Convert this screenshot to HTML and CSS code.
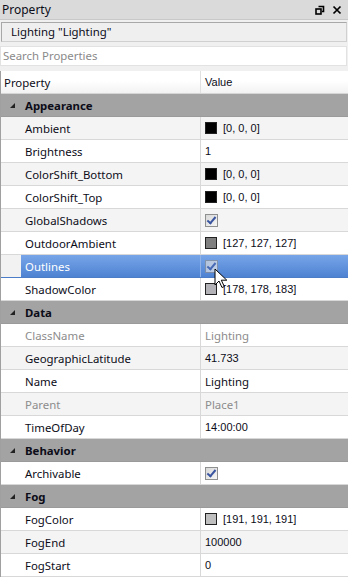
FILE: index.html
```html
<!DOCTYPE html>
<html>
<head>
<meta charset="utf-8">
<title>Property</title>
<link rel="stylesheet" href="styles.css">
</head>
<body>
<div class="panel">
  <div class="titlebar">
    <span class="title">Property</span>
    <span class="tb-icons">
      <svg width="10" height="10" viewBox="0 0 10 10"><path d="M3.5 1.5h5v5h-1.5" fill="none" stroke="#000" stroke-width="1.6"/><rect x="1" y="4" width="5" height="5" fill="none" stroke="#000" stroke-width="1.6"/></svg>
      <svg width="10" height="10" viewBox="0 0 10 10"><path d="M1.5 1.5l7 7M8.5 1.5l-7 7" stroke="#000" stroke-width="1.7"/></svg>
    </span>
  </div>
  <div class="tools">
    <div class="selection">Lighting "Lighting"</div>
    <div class="search">Search Properties</div>
  </div>
  <div class="grid">
    <div class="row head"><div class="name">Property</div><div class="value">Value</div></div>

    <div class="row cat"><span class="arrow"></span>Appearance</div>
    <div class="row alt"><div class="name">Ambient</div><div class="value num"><span class="swatch" style="background:#000"></span>[0, 0, 0]</div></div>
    <div class="row"><div class="name">Brightness</div><div class="value num">1</div></div>
    <div class="row alt"><div class="name">ColorShift_Bottom</div><div class="value num"><span class="swatch" style="background:#000"></span>[0, 0, 0]</div></div>
    <div class="row"><div class="name">ColorShift_Top</div><div class="value num"><span class="swatch" style="background:#000"></span>[0, 0, 0]</div></div>
    <div class="row alt"><div class="name">GlobalShadows</div><div class="value"><span class="check"></span></div></div>
    <div class="row"><div class="name">OutdoorAmbient</div><div class="value num"><span class="swatch" style="background:#7f7f7f"></span>[127, 127, 127]</div></div>
    <div class="row selected"><div class="name">Outlines</div><div class="value"><span class="check"></span></div></div>
    <div class="row"><div class="name">ShadowColor</div><div class="value num"><span class="swatch" style="background:#b2b2b7"></span>[178, 178, 183]</div></div>

    <div class="row cat"><span class="arrow"></span>Data</div>
    <div class="row"><div class="name ro">ClassName</div><div class="value ro">Lighting</div></div>
    <div class="row alt"><div class="name">GeographicLatitude</div><div class="value num">41.733</div></div>
    <div class="row"><div class="name">Name</div><div class="value">Lighting</div></div>
    <div class="row alt"><div class="name ro">Parent</div><div class="value ro">Place1</div></div>
    <div class="row"><div class="name">TimeOfDay</div><div class="value num">14:00:00</div></div>

    <div class="row cat"><span class="arrow"></span>Behavior</div>
    <div class="row"><div class="name">Archivable</div><div class="value"><span class="check"></span></div></div>

    <div class="row cat"><span class="arrow"></span>Fog</div>
    <div class="row"><div class="name">FogColor</div><div class="value num"><span class="swatch" style="background:#bfbfbf"></span>[191, 191, 191]</div></div>
    <div class="row alt"><div class="name">FogEnd</div><div class="value num">100000</div></div>
    <div class="row"><div class="name">FogStart</div><div class="value num">0</div></div>
  </div>
  <svg class="cursor" width="14" height="21" viewBox="0 0 14 21"><path d="M1 1v16l4-4 3 6.5 2.3-1-3-6.3h5.5z" fill="#fff" stroke="#000" stroke-width="1" stroke-linejoin="round"/></svg>
</div>
</body>
</html>
```

FILE: styles.css
```css
html, body {
  margin: 0;
  padding: 0;
  background: #fff;
}
.panel {
  position: relative;
  width: 348px;
  height: 577px;
  overflow: hidden;
  font-family: "Noto Sans", "Open Sans", sans-serif;
  font-size: 11.4px;
  color: #0c0c18;
  background: #f0f0f0;
}
.titlebar {
  display: flex;
  align-items: center;
  justify-content: space-between;
  height: 20px;
  padding: 0 6px 0 2px;
  background: #dadada;
  box-sizing: border-box;
  border-bottom: 1px solid #c8c8c8;
}
.title {
  font-size: 12px;
}
.tb-icons {
  display: flex;
  gap: 7px;
  align-items: center;
}
.tools {
  padding: 2px 1px 5px 1px;
}
.selection {
  height: 20px;
  box-sizing: border-box;
  padding: 0 0 0 9px;
  line-height: 18px;
  border: 1px solid #a8a8a8;
  border-right-color: #d0d0d0;
  border-bottom-color: #d0d0d0;
  background: #efefef;
  margin-bottom: 4px;
}
.search {
  height: 20px;
  box-sizing: border-box;
  padding-left: 2px;
  line-height: 18px;
  background: #fff;
  border: 1px solid #e2e2e2;
  color: #8a8a8a;
  margin-left: -1px;
}
.grid {
  background: #fff;
  border-left: 1px solid #a0a0a0;
}
.row {
  display: grid;
  grid-template-columns: 200px 1fr;
  height: 23px;
  box-sizing: border-box;
  border-bottom: 1px solid #d8d8d8;
  background: #fff;
}
.row.alt {
  background: #f4f4f4;
}
.row .name {
  padding-left: 24px;
  border-right: 1px solid #d8d8d8;
  display: flex;
  align-items: center;
  white-space: nowrap;
}
.row .value {
  padding-left: 4px;
  display: flex;
  align-items: center;
  white-space: nowrap;
}
.row .num {
  font-family: "Liberation Sans", Arial, sans-serif;
  font-size: 11px;
}
.row .ro {
  color: #8c8c8c;
}
.row.head {
  background: linear-gradient(#fff 0, #fff 45%, #f2f2f2 100%);
  border-bottom: 1px solid #d5d5d5;
}
.row.head .name {
  padding-left: 3px;
  border-right-color: #e0e0e0;
}
.row.head .value {
  font-family: "Liberation Sans", Arial, sans-serif;
  font-size: 11px;
}
.row.cat {
  display: flex;
  align-items: center;
  background: #a3a3a3;
  border-bottom: 1px solid #9a9a9a;
  font-weight: bold;
  padding-left: 9px;
}
.arrow {
  width: 0;
  height: 0;
  border-left: 5px solid transparent;
  border-bottom: 5px solid #222;
  margin-right: 10px;
  margin-top: 1px;
}
.row.selected {
  background: linear-gradient(#78a5e8, #4d82d2);
  color: #fff;
  border-bottom-color: #4a7cc8;
}
.row.selected .name {
  border-right-color: #8fb1e6;
  background: linear-gradient(#f2f2f2, #f2f2f2) no-repeat 0 0 / 20px 100%;
}
.row.selected .check {
  opacity: .65;
}
.swatch {
  display: inline-block;
  width: 12px;
  height: 12px;
  box-sizing: border-box;
  border: 1px solid #222;
  margin-right: 6px;
}
.check {
  position: relative;
  display: inline-block;
  width: 13px;
  height: 13px;
  box-sizing: border-box;
  border: 1px solid #8e8f8f;
  background: linear-gradient(135deg, #d8d8d8, #f6f6f6);
}
.check::after {
  content: "";
  position: absolute;
  left: 3px;
  top: 0;
  width: 3px;
  height: 7px;
  border-right: 2px solid #3a55a0;
  border-bottom: 2px solid #3a55a0;
  transform: rotate(40deg);
}
.cursor {
  position: absolute;
  left: 214px;
  top: 268px;
}
```
